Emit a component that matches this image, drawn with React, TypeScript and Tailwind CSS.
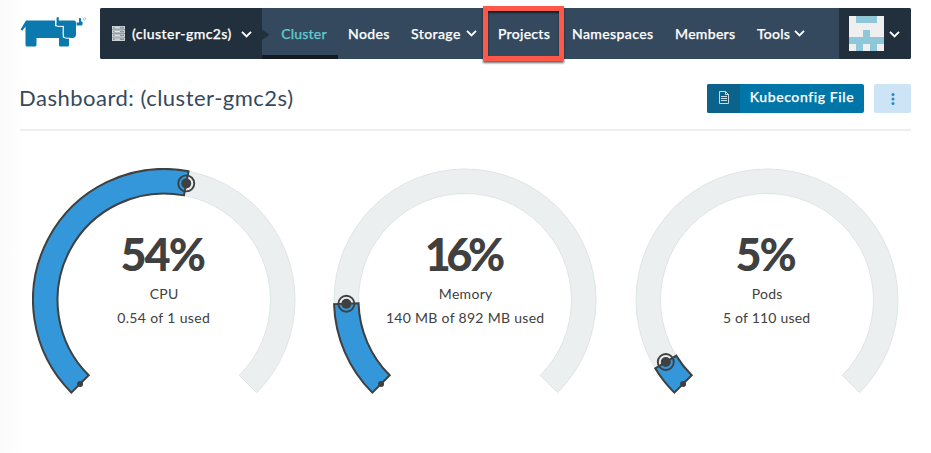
import type { ReactNode } from "react";

function Chevron({ className = "" }: { className?: string }) {
  return (
    <svg className={`shrink-0 ${className}`} width="11" height="8" viewBox="0 0 11 8" fill="none" stroke="currentColor" strokeWidth="1.900">
      <path d="M1 1.800 5.500 6.300 10 1.800" />
    </svg>
  );
}

function Logo() {
  return (
    <svg className="block h-[32px] w-[67px]" viewBox="0 0 67 32" fill="#0b79ae">
      <path d="M6 4.500H35V10.300H42.800V21.800H49V29Q49 30.500 47.500 30.500H40.500Q39 30.500 39 29V22H16.500V29Q16.500 30.500 15 30.500H7Q5.500 30.500 5.500 29V10.500L2.500 14.500Q1 14.500.6 13.500Z" />
      <path d="M36.700 1.500Q37.500.500 38.800 1.500V4.500H54Q56 4.500 56 6.500V19Q55.500 22 52.500 22H45.500Q43 22 43 19V11H38Q36 11 36 8.500Z" />
      <path d="M35.900 4V8.500Q35.900 10.400 38 10.400H44M43.300 11V19Q43.300 22.200 46 22.200H50" fill="none" stroke="#fff" strokeWidth="1" />
      <path d="M56.600 6.500H59V2.500Q59.500 1 61 2.500V5.500Q62.600 5.200 62.600 6.500V8Q62.600 9.500 60.500 9.500H56.600Z" />
      <circle cx="64.500" cy="3" r="1.200" fill="none" stroke="#0b79ae" strokeWidth=".5" opacity=".7" />
    </svg>
  );
}

function ServerIcon() {
  return (
    <svg className="block shrink-0" width="13" height="15" viewBox="0 0 13 15">
      {[0, 3.8, 7.6, 11.4].map((y) => (
        <g key={y}>
          <rect x=".5" y={y + 0.4} width="12" height="2.700" fill="#8c969f" stroke="#d8dee2" strokeWidth=".9" />
          <path d={`M2.500 ${y + 1.75}H8`} stroke="#f3f5f6" strokeWidth=".9" />
        </g>
      ))}
    </svg>
  );
}

function NavItem({ className, children }: { className: string; children: ReactNode }) {
  return <div className={`flex h-[51px] shrink-0 items-center pb-[1px] whitespace-nowrap ${className}`}>{children}</div>;
}

function Gauge({ portion, value, label, detail, valueClass, detailClass }: {
  portion: number; value: string; label: string; detail: string; valueClass: string; detailClass: string;
}) {
  const c = 132;
  const point = (fraction: number, r: number) => {
    const a = ((135 + 270 * fraction) * Math.PI) / 180;
    return [c + r * Math.cos(a), c + r * Math.sin(a)];
  };
  const band = (end: number) => {
    const large = end * 270 > 180 ? 1 : 0;
    return `M${point(0, 131)} A131 131 0 ${large} 1 ${point(end, 131)} L${point(end, 106.500)} A106.500 106.500 0 ${large} 0 ${point(0, 106.500)} Z`;
  };
  const [hx, hy] = point(portion, 118.7);
  const [sx, sy] = point(0, 118.7);
  return (
    <div className="grid h-[230px] w-[264px] shrink-0">
      <svg className="col-start-1 row-start-1" width="264" height="230" viewBox="0 0 264 230">
        <path d={band(1)} fill="#ebeff0" stroke="#dfe5e6" />
        <path d={band(portion)} fill="#3497da" stroke="#404040" strokeWidth="2" />
        <circle cx={sx} cy={sy} r="3" fill="#404040" />
        <circle cx={hx} cy={hy} r="5" fill="#404040" />
        <circle cx={hx} cy={hy} r="8" fill="none" stroke="#404040" strokeWidth="1.900" />
      </svg>
      <div className="col-start-1 row-start-1 flex flex-col items-center pt-[60px] text-[#404040]">
        <div className={`h-[52px] text-[45px] leading-[52px] font-black whitespace-nowrap ${valueClass}`}>{value}</div>
        <div className="mt-[4px] h-[20px] pl-[1px] text-[14px] leading-[20px] tracking-[0.3px]">{label}</div>
        <div className={`mt-[4px] h-[20px] text-[14px] leading-[20px] whitespace-nowrap ${detailClass}`}>{detail}</div>
      </div>
    </div>
  );
}

export default function App() {
  return (
    <div className="h-[453px] w-[931px] overflow-hidden bg-white bg-linear-to-r from-[#fafafa] to-white to-[22px] font-['Lato','Liberation_Sans',sans-serif] text-[#34495e]">
      <header className="flex pt-[8px] pl-[20px]">
        <div className="w-[80px] shrink-0 pt-[8px]"><Logo /></div>
        <nav className="flex h-[51px] w-[811px] rounded-[2px] bg-[#34495e] text-[14px] font-medium text-white [-webkit-text-stroke:0.25px_currentColor]">
          <div className="flex h-[51px] w-[162px] shrink-0 items-center rounded-l-[2px] bg-[#22303d] pl-[12px]">
            <ServerIcon />
            <span className="w-[109px] pb-[1px] pl-[7px] tracking-[0.45px] whitespace-nowrap">(cluster-gmc2s)</span>
            <Chevron className="ml-[7px]" />
          </div>
          <svg className="-mr-[8px] shrink-0" width="8" height="51"><path d="M0 21.500 7.500 26.700 0 32Z" fill="#22303d" /></svg>
          <NavItem className="w-[76px] justify-center border-b-4 border-[#141a20] pt-[4px] pl-[8px] tracking-[0.2px] text-[#61c7cc]">Cluster</NavItem>
          <NavItem className="w-[63px] pl-[10px] tracking-[0.4px]">Nodes</NavItem>
          <NavItem className="w-[82px] pl-[10px] tracking-[0.4px]"><span className="w-[55px]">Storage</span><Chevron /></NavItem>
          <div className="-mt-[2px] flex h-[55px] w-[81px] shrink-0 items-center justify-center border-[5px] border-[#ff5848] pb-[1px] pl-[1px] tracking-[0.3px] shadow-[0_2px_2px_rgba(0,0,0,0.6),inset_0_2px_2px_rgba(0,0,0,0.6)]">Projects</div>
          <NavItem className="w-[101px] pl-[8px] tracking-[0.4px]">Namespaces</NavItem>
          <NavItem className="w-[82px] pl-[10px] tracking-[0.3px]">Members</NavItem>
          <NavItem className="w-[92px] pl-[10px] tracking-[0.2px]"><span className="w-[37px]">Tools</span><Chevron /></NavItem>
          <div className="flex h-[51px] w-[72px] shrink-0 items-center rounded-r-[2px] bg-[#22303d] pl-[10px]">
            <svg className="shrink-0" width="35" height="35" viewBox="0 0 5 5" shapeRendering="crispEdges">
              <path d="M0 0H5V5H0Z" fill="#efefef" />
              <path d="M1 0H4V1H1ZM2 2H3V3H5V4H4V5H3V4H2V5H1V4H0V3H2Z" fill="#8ec6da" />
            </svg>
            <Chevron className="ml-[5px]" />
          </div>
        </nav>
      </header>

      <section className="mx-[20px] flex h-[72px] border-b-2 border-[#ebefef]">
        <h1 className="-ml-[1px] w-[688px] pt-[23px] text-[22px] leading-[32px] font-normal tracking-[0.5px] whitespace-nowrap">Dashboard: (cluster-gmc2s)</h1>
        <button className="mt-[25px] flex h-[29px] w-[157px] shrink-0 overflow-hidden rounded-[2px] bg-[#0075a8] text-[14px] font-medium text-white [-webkit-text-stroke:0.25px_currentColor]">
          <span className="flex h-[29px] w-[33px] items-center justify-center bg-[#0b628a] pb-[3px]">
            <svg width="10" height="13" viewBox="0 0 10 13" fill="none" stroke="#dce9ef">
              <path d="M.5.500H6.500L9.500 3.500V12.500H.5ZM6.500.500V3.500H9.500M2 5.500H8M2 7.500H8M2 9.500H8" strokeWidth=".9" />
            </svg>
          </span>
          <span className="flex-1 text-center leading-[26px] tracking-[0.6px]">Kubeconfig File</span>
        </button>
        <button className="mt-[25px] ml-[10px] flex h-[29px] w-[37px] shrink-0 items-center justify-center rounded-[2px] bg-[#cce4f6]">
          <svg width="4" height="14" viewBox="0 0 4 14" fill="#238bce">
            <circle cx="2" cy="2.500" r="1.500" /><circle cx="2" cy="7" r="1.500" /><circle cx="2" cy="11.500" r="1.500" />
          </svg>
        </button>
      </section>

      <main className="flex gap-[37.500px] pt-[37px] pl-[31.700px]">
        <Gauge portion={0.54} value="54%" label="CPU" detail="0.54 of 1 used" valueClass="-ml-[3px] tracking-[-2px]" detailClass="tracking-[0.35px]" />
        <Gauge portion={0.16} value="16%" label="Memory" detail="140 MB of 892 MB used" valueClass="-ml-[5px] tracking-[-4.500px]" detailClass="tracking-[0.3px]" />
        <Gauge portion={0.05} value="5%" label="Pods" detail="5 of 110 used" valueClass="-ml-[3px] tracking-[-2px]" detailClass="tracking-[0.2px]" />
      </main>
    </div>
  );
}
